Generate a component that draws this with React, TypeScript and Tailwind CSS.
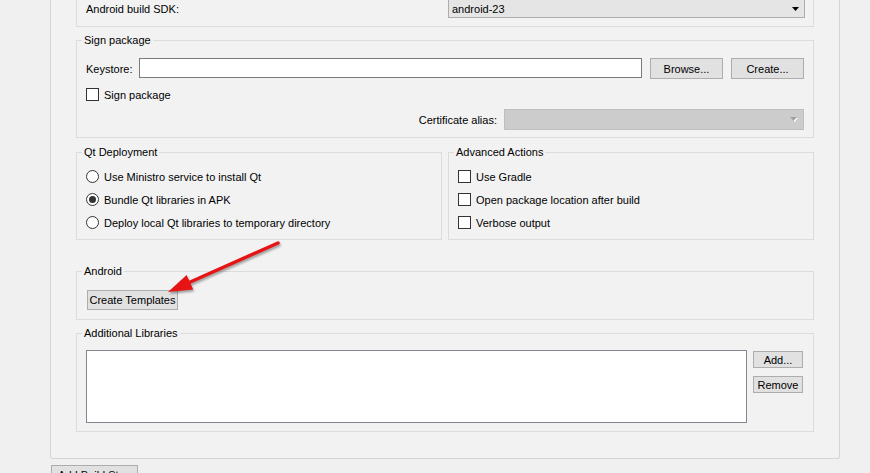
import React from "react";

function Btn({ label, className }: { label: string; className: string }) {
  return (
    <div className={"flex shrink-0 items-center justify-center border border-[#adadad] bg-[#e1e1e1] " + className}>
      {label}
    </div>
  );
}

function Check({ label }: { label: string }) {
  return (
    <div className="flex h-[23px] items-center gap-[5px]">
      <span className="h-[13px] w-[13px] border border-[#333333] bg-white" />
      <span>{label}</span>
    </div>
  );
}

function Radio({ label, checked }: { label: string; checked?: boolean }) {
  return (
    <div className="flex h-[23px] items-center gap-[5px]">
      <span className="flex h-[13px] w-[13px] items-center justify-center rounded-full border border-[#333333] bg-white">
        {checked && <span className="h-[7px] w-[7px] rounded-full bg-[#333333]" />}
      </span>
      <span>{label}</span>
    </div>
  );
}

function Group({ title, className, children }: { title: string; className?: string; children: React.ReactNode }) {
  return (
    <fieldset className={"min-w-0 border border-[#dcdcdc] " + (className ?? "")}>
      <legend className="ml-[5px] px-[2px] leading-[14px]">{title}</legend>
      {children}
    </fieldset>
  );
}

export default function App() {
  return (
    <div className="relative h-[473px] w-[870px] overflow-hidden bg-[#f0f0f0] pl-[50px] font-['Liberation_Sans',Arial,sans-serif] text-[11px] leading-[14px] text-black">
      <div className="w-[790px] rounded-b-[3px] border border-t-0 border-[#d5d5d5] bg-[#f2f2f2] px-[25px] pb-[26px]">
        {/* build SDK */}
        <div className="h-[27px] border border-t-0 border-[#dcdcdc] pl-[9px]">
          <div className="flex h-[18px] items-center">
            <span className="w-[362px]">Android build SDK:</span>
            <div className="flex h-[18px] w-[357px] items-center justify-between border border-t-0 border-[#acacac] bg-[#e5e5e5] pl-[3px] pr-[5px]">
              <span>android-23</span>
              <svg width="7" height="4" viewBox="0 0 7 4">
                <polygon points="0,0 7,0 3.5,4" fill="#000" />
              </svg>
            </div>
          </div>
        </div>

        <Group title="Sign package" className="mt-[6px]">
          <div className="pb-[7px] pl-[9px] pr-[9px] pt-[11px]">
            <div className="flex h-[21px] items-center">
              <span className="w-[53px]">Keystore:</span>
              <div className="h-[20px] w-[503px] self-start border border-[#7a7a7a] bg-white" />
              <Btn label="Browse..." className="ml-[8px] h-[21px] w-[73px]" />
              <Btn label="Create..." className="ml-[8px] h-[21px] w-[73px]" />
            </div>
            <div className="mt-[9px] flex h-[13px] items-center gap-[5px]">
              <span className="h-[13px] w-[13px] border border-[#333333] bg-white" />
              <span>Sign package</span>
            </div>
            <div className="mt-[8px] flex h-[21px] items-center justify-end">
              <span>Certificate alias:</span>
              <div className="ml-[7px] flex h-[21px] w-[300px] items-center justify-end border border-[#bfbfbf] bg-[#cccccc] pr-[5px]">
                <svg width="8" height="5" viewBox="0 0 8 5">
                  <polygon points="1,1 8,1 4.5,5" fill="#ffffff" />
                  <polygon points="0,0 7,0 3.5,4" fill="#a0a0a0" />
                </svg>
              </div>
            </div>
          </div>
        </Group>

        <div className="mt-[7px] flex gap-[6px]">
          <Group title="Qt Deployment" className="w-[366px]">
            <div className="pb-[5px] pl-[9px] pt-[6px]">
              <Radio label="Use Ministro service to install Qt" />
              <Radio label="Bundle Qt libraries in APK" checked />
              <Radio label="Deploy local Qt libraries to temporary directory" />
            </div>
          </Group>
          <Group title="Advanced Actions" className="w-[366px]">
            <div className="pb-[5px] pl-[9px] pt-[6px]">
              <Check label="Use Gradle" />
              <Check label="Open package location after build" />
              <Check label="Verbose output" />
            </div>
          </Group>
        </div>

        <Group title="Android" className="mt-[24px]">
          <div className="pb-[9px] pl-[10px] pt-[12px]">
            <Btn label="Create Templates" className="h-[20px] w-[91px]" />
          </div>
        </Group>

        <Group title="Additional Libraries" className="mt-[6px]">
          <div className="flex gap-[6px] pb-[8px] pl-[9px] pt-[10px]">
            <div className="h-[73px] w-[661px] border border-[#828790] bg-white" />
            <div className="mt-[1px] flex flex-col gap-[8px]">
              <Btn label="Add..." className="h-[17px] w-[50px]" />
              <Btn label="Remove" className="h-[17px] w-[50px]" />
            </div>
          </div>
        </Group>
      </div>

      <div className="ml-[1px] mt-[6px] flex h-[20px] w-[87px] items-center justify-center border border-[#adadad] bg-[#e1e1e1]">
        Add Build Step
      </div>

      <svg
        className="pointer-events-none absolute left-0 top-0 drop-shadow-[1px_2px_1px_rgba(0,0,0,0.35)]"
        width="870"
        height="473"
        viewBox="0 0 870 473"
      >
        <line x1="278" y1="243" x2="188" y2="283" stroke="#e61414" strokeWidth="3.5" strokeLinecap="round" />
        <polygon points="168,292 186.6,274.9 193.2,289.5" fill="#e61414" />
      </svg>
    </div>
  );
}
